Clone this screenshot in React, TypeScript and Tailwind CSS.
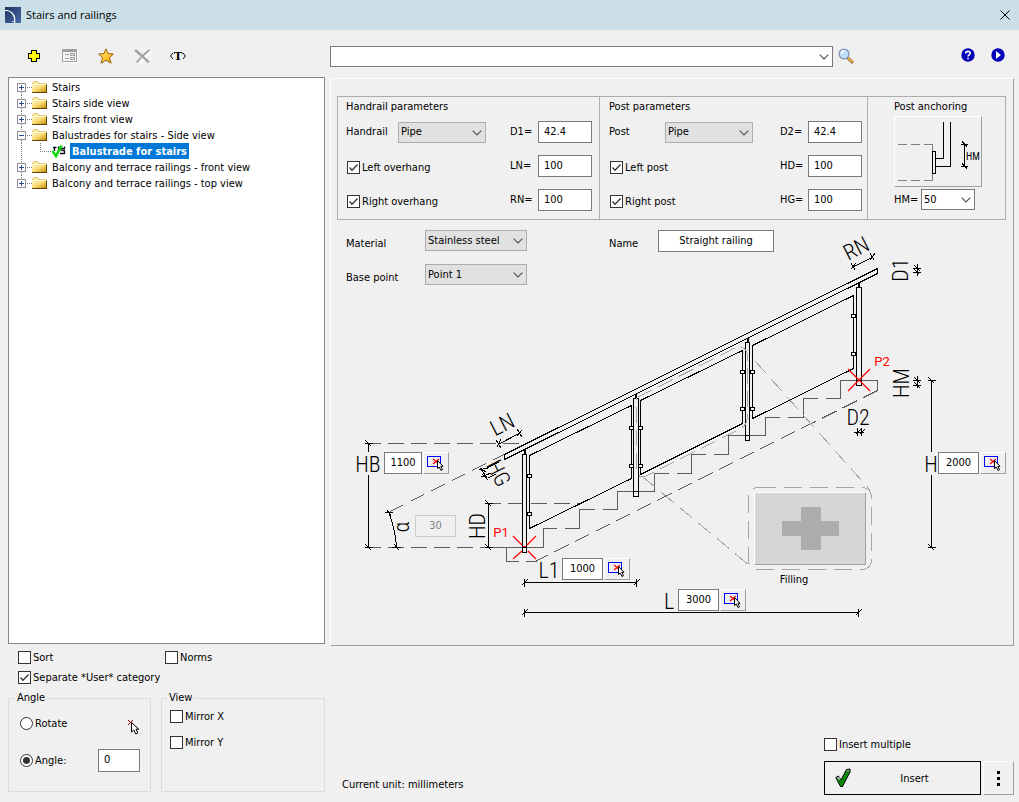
import React, { useId, useState } from "react";

const UI = "font-['DejaVu_Sans_Condensed','DejaVu_Sans',sans-serif]";

/* ---------- small controls ---------- */

function CheckBox({ label, checked = false }: { label: string; checked?: boolean }) {
  const id = useId();
  return (
    <div className="flex items-center gap-[2px]">
      <span className="relative block h-[13px] w-[13px]">
        <input
          id={id}
          type="checkbox"
          defaultChecked={checked}
          className="peer block h-[13px] w-[13px] appearance-none border border-[#333333] bg-white"
        />
        <svg
          viewBox="0 0 13 13"
          className="pointer-events-none absolute inset-0 hidden h-[13px] w-[13px] peer-checked:block"
        >
          <path d="M2.5 6.5 L5 9.2 L10.5 3.5" fill="none" stroke="#333333" strokeWidth="1.3" />
        </svg>
      </span>
      <label htmlFor={id} className="pt-px whitespace-nowrap">{label}</label>
    </div>
  );
}

function Radio({ label, checked = false }: { label: string; checked?: boolean }) {
  const id = useId();
  return (
    <div className="flex items-center gap-[2px]">
      <span className="relative block h-[13px] w-[13px]">
        <input
          id={id}
          name="rotation"
          type="radio"
          defaultChecked={checked}
          className="peer block h-[13px] w-[13px] appearance-none rounded-full border border-[#333333] bg-white"
        />
        <span className="pointer-events-none absolute inset-[3px] hidden rounded-full bg-[#333333] peer-checked:block" />
      </span>
      <label htmlFor={id}>{label}</label>
    </div>
  );
}

function Chevron({ className = "" }: { className?: string }) {
  return (
    <svg viewBox="0 0 10 6" className={`pointer-events-none h-[6px] w-[10px] ${className}`}>
      <path d="M0.7 0.7 L5 4.9 L9.3 0.7" fill="none" stroke="#505050" strokeWidth="1.1" />
    </svg>
  );
}

function Select({
  id,
  options,
  width,
  white = false,
  label,
}: {
  id?: string;
  options: string[];
  width: string;
  white?: boolean;
  label?: string;
}) {
  return (
    <span className={`relative block h-[21px] ${width}`}>
      <select
        id={id}
        aria-label={label}
        className={`block h-[21px] w-full appearance-none border pr-4 pl-[2px] text-[11px] leading-4 ${
          white ? "border-[#7a7a7a] bg-white" : "border-[#adadad] bg-[#e1e1e1]"
        }`}
      >
        {options.map((o) => (
          <option key={o}>{o}</option>
        ))}
      </select>
      <Chevron className="absolute top-2 right-1" />
    </span>
  );
}

function NumberField({ id, value }: { id: string; value: string }) {
  return (
    <input
      id={id}
      defaultValue={value}
      className="h-[22px] w-[54px] border border-[#7a7a7a] bg-white px-[5px] pb-[2px] text-[11px] leading-4"
    />
  );
}

/* ---------- icons ---------- */

function AppIcon() {
  return (
    <svg viewBox="0 0 16 16" className="h-4 w-4">
      <defs>
        <linearGradient id="appBg" x1="0" y1="0" x2="1" y2="1">
          <stop offset="0" stopColor="#22355f" />
          <stop offset="1" stopColor="#4568a8" />
        </linearGradient>
      </defs>
      <rect width="16" height="16" fill="url(#appBg)" />
      <path d="M0 3.5 H2 C6 4 9.5 7.5 9.7 12 V16" fill="none" stroke="#fff" strokeWidth="1.2" />
      <path d="M7 14.5 H10" stroke="#cfd9ee" strokeWidth="1" />
    </svg>
  );
}

function PlusIcon() {
  return (
    <svg viewBox="0 0 12 12" className="h-3 w-3" shapeRendering="crispEdges">
      <path
        d="M3.5 0.5 H8.5 V3.5 H11.5 V8.5 H8.5 V11.5 H3.5 V8.5 H0.5 V3.5 H3.5 Z"
        fill="#ffff00"
        stroke="#000"
      />
    </svg>
  );
}

function FormIcon() {
  return (
    <svg viewBox="0 0 16 14" className="h-[14px] w-4" shapeRendering="crispEdges">
      <rect x="1.5" y="1.5" width="14" height="12" fill="none" stroke="#fff" />
      <rect x="0.5" y="0.5" width="14" height="12" fill="#f4f4f4" stroke="#a0a0a0" />
      <path d="M1 2 H14" stroke="#a0a0a0" strokeWidth="2" />
      <path d="M3 5.5 H7 M3 9.5 H7" stroke="#a0a0a0" />
      <path d="M8.5 4.5 H12.5 V6.5 H8.5 Z M8.5 8.5 H12.5 V10.5 H8.5 Z" fill="none" stroke="#a0a0a0" />
    </svg>
  );
}

function StarIcon() {
  return (
    <svg viewBox="0 0 16 16" className="h-4 w-4">
      <defs>
        <linearGradient id="starFill" x1="0" y1="0" x2="1" y2="1">
          <stop offset="0" stopColor="#ffe680" />
          <stop offset="0.6" stopColor="#fdc32e" />
          <stop offset="1" stopColor="#e89a10" />
        </linearGradient>
      </defs>
      <path
        d="M8 0.8 L10 5.6 L15.4 6 L11.4 9.7 L13.2 15.2 L8 12.2 L3 15.2 L4.6 9.7 L0.6 6 L6 5.6 Z"
        fill="url(#starFill)"
        stroke="#9a6410"
        strokeWidth="1"
        strokeLinejoin="round"
      />
    </svg>
  );
}

function DeleteIcon() {
  return (
    <svg viewBox="0 0 17 15" className="h-[15px] w-[17px]">
      <path d="M2 1.5 L15.5 14.5 M16 1.5 L4 14.5" stroke="#fff" strokeWidth="1.6" transform="translate(1 1)" />
      <path d="M1 1 C5 4 9 8 15 13.5" fill="none" stroke="#a0a0a0" strokeWidth="2.2" />
      <path d="M15.5 1 C10 5 6 9 2.5 13.5" fill="none" stroke="#a0a0a0" strokeWidth="1.6" />
    </svg>
  );
}

function MagnifierIcon() {
  return (
    <svg viewBox="0 0 16 16" className="h-4 w-4">
      <path d="M9.5 9.5 L14 14" stroke="#6b4a18" strokeWidth="3" strokeLinecap="round" />
      <path d="M10 9.8 L14 13.8" stroke="#f0b840" strokeWidth="1.8" strokeLinecap="round" />
      <circle cx="6" cy="6" r="4.9" fill="#bfe0fa" stroke="#7f92b0" strokeWidth="1.2" />
      <path d="M3.2 5.6 C3.6 3.8 5 2.9 6.6 3" fill="none" stroke="#fff" strokeWidth="1.4" />
    </svg>
  );
}

function FolderIcon() {
  return (
    <svg viewBox="0 0 16 16" className="h-4 w-4 shrink-0">
      <defs>
        <linearGradient id="folderFill" x1="0" y1="0" x2="1" y2="1">
          <stop offset="0.1" stopColor="#fff6c8" />
          <stop offset="0.5" stopColor="#f6d468" />
          <stop offset="1" stopColor="#c47f00" />
        </linearGradient>
      </defs>
      <path d="M0.5 13 V3.5 L1.5 2.5 H5.5 L6.5 4.5 H13.5 V12.5 Z" fill="#fbe9a6" stroke="#e0c678" />
      <rect x="0" y="5" width="15" height="9" fill="url(#folderFill)" />
      <path d="M0 5.5 H14" stroke="#fff8d8" />
      <path d="M14.5 5 V13.5 H0" fill="none" stroke="#4a3204" strokeOpacity="0.85" />
    </svg>
  );
}

function BalustradeIcon() {
  return (
    <svg viewBox="0 0 16 16" className="h-4 w-4 shrink-0">
      <path d="M2 4.5 H5.5 M3.5 5 V8 M7.5 3.5 V8 M8 8 L11 5.5 H13.5 V3.5 M9 10.5 H13.5 V7.5 H10.5" fill="none" stroke="#111" strokeWidth="1.3" />
      <path d="M1.5 8 L5 13 L10.5 2.5" fill="none" stroke="#08dc08" strokeWidth="2.6" />
    </svg>
  );
}

function Cursor({ x, y }: { x: number; y: number }) {
  return (
    <path
      transform={`translate(${x} ${y})`}
      d="M0.5 0.5 V10 L2.8 8 L4.8 12 L6.8 11 L5 7.2 H7.8 Z"
      fill="#fff"
      stroke="#000"
      strokeWidth="1"
    />
  );
}

/* ---------- tree ---------- */

const GROUPS = [
  { name: "Stairs" },
  { name: "Stairs side view" },
  { name: "Stairs front view" },
  { name: "Balustrades for stairs - Side view", child: "Balustrade for stairs" },
  { name: "Balcony and terrace railings - front view" },
  { name: "Balcony and terrace railings - top view" },
];

function Expander({ open, first, last }: { open: boolean; first: boolean; last: boolean }) {
  return (
    <svg viewBox="0 0 15 16" className="h-4 w-[15px] shrink-0" shapeRendering="crispEdges">
      {!first && <path d="M4.5 0 V4" stroke="#808080" strokeDasharray="1 1" />}
      {!last && <path d="M4.5 13 V16" stroke="#808080" strokeDasharray="1 1" />}
      <path d="M10 8.5 H15" stroke="#808080" strokeDasharray="1 1" />
      <rect x="0.5" y="4.5" width="8" height="8" fill="#fcfcfc" stroke="#919191" />
      <path d="M2 8.5 H7" stroke="#2a4a9c" />
      {!open && <path d="M4.5 6 V11" stroke="#2a4a9c" />}
    </svg>
  );
}

function Tree() {
  return (
    <ul className="min-h-0 flex-1 border border-[#828790] bg-white pt-px pl-2">
      {GROUPS.map((g, i) => (
        <li key={g.name}>
          <div className="flex h-4 items-center">
            <Expander open={!!g.child} first={i === 0} last={i === GROUPS.length - 1} />
            <FolderIcon />
            <span className="pt-[2px] pl-1 leading-4 whitespace-nowrap">{g.name}</span>
          </div>
          {g.child && (
            <div className="flex h-4 items-center">
              <svg viewBox="0 0 34 16" className="h-4 w-[34px] shrink-0" shapeRendering="crispEdges">
                <path d="M4.5 0 V16 M23.5 0 V8.5 H34" fill="none" stroke="#808080" strokeDasharray="1 1" />
              </svg>
              <BalustradeIcon />
              <span className="ml-[3px] bg-[#0078d7] px-[2px] pt-px leading-[15px] font-bold whitespace-nowrap text-white">
                {g.child}
              </span>
            </div>
          )}
        </li>
      ))}
    </ul>
  );
}

/* ---------- parameter panels ---------- */

function AnchorIcon() {
  return (
    <svg viewBox="0 0 86 69" className="h-[69px] w-[86px]" shapeRendering="crispEdges">
      <g fill="none" stroke="#808080">
        <path d="M3 27.5 H38" strokeDasharray="9 4" />
        <path d="M3 63.5 H38" strokeDasharray="9 4" />
        <path d="M37.5 27 V34 M37.5 56 V64" />
      </g>
      <g fill="none" stroke="#000">
        <rect x="37.5" y="34.5" width="3" height="22" />
        <path d="M48.5 5 V41.5 H41 M55.5 5 V49.5 H41" />
        <path d="M69.5 27 V50 M66 27.5 H73 M66 49.5 H73 M67 24.5 L72 29.5 M67 46.5 L72 51.5" />
      </g>
      <text x="71" y="43" fontSize="10" fill="#000" className="font-['Roboto_Condensed','Liberation_Sans_Narrow',sans-serif]">
        HM
      </text>
    </svg>
  );
}

function Parameters() {
  return (
    <div className="flex border border-[#acacac]">
      <section className="w-[262px] border-r border-[#acacac] pb-[2px] pl-2">
        <h2 className="h-[18px] leading-5">Handrail parameters</h2>
        <div className="grid auto-rows-[34px] grid-cols-[52px_112px_28px_54px] items-center">
          <label htmlFor="handrail">Handrail</label>
          <Select id="handrail" options={["Pipe", "Square"]} width="w-[88px]" />
          <label htmlFor="d1">D1=</label>
          <NumberField id="d1" value="42.4" />
          <div className="col-span-2 pt-[2px] pl-px"><CheckBox label="Left overhang" checked /></div>
          <label htmlFor="ln">LN=</label>
          <NumberField id="ln" value="100" />
          <div className="col-span-2 pt-[2px] pl-px"><CheckBox label="Right overhang" checked /></div>
          <label htmlFor="rn">RN=</label>
          <NumberField id="rn" value="100" />
        </div>
      </section>
      <section className="w-[268px] border-r border-[#acacac] pb-[2px] pl-[9px]">
        <h2 className="h-[18px] leading-5">Post parameters</h2>
        <div className="grid auto-rows-[34px] grid-cols-[56px_115px_28px_54px] items-center">
          <label htmlFor="post">Post</label>
          <Select id="post" options={["Pipe", "Square"]} width="w-[88px]" />
          <label htmlFor="d2">D2=</label>
          <NumberField id="d2" value="42.4" />
          <div className="col-span-2 pt-[2px] pl-px"><CheckBox label="Left post" checked /></div>
          <label htmlFor="hd">HD=</label>
          <NumberField id="hd" value="100" />
          <div className="col-span-2 pt-[2px] pl-px"><CheckBox label="Right post" checked /></div>
          <label htmlFor="hg">HG=</label>
          <NumberField id="hg" value="100" />
        </div>
      </section>
      <section className="flex-1 pl-[26px]">
        <h2 className="h-[19px] leading-5 whitespace-nowrap">Post anchoring</h2>
        <button
          aria-label="Post anchoring type"
          className="block h-[71px] w-[88px] border border-t-white border-r-[#a0a0a0] border-b-[#a0a0a0] border-l-white"
        >
          <AnchorIcon />
        </button>
        <div className="flex items-center pt-[2px]">
          <label htmlFor="hm" className="w-[27px]">HM=</label>
          <Select id="hm" options={["50", "100"]} width="w-[54px]" white />
        </div>
      </section>
    </div>
  );
}

function GeneralForm() {
  return (
    <div className="col-start-1 row-start-1 grid auto-rows-[34px] grid-cols-[79px_184px_49px_116px] self-start pt-[10px] pl-[15px]">
      <label htmlFor="material" className="leading-7">Material</label>
      <Select id="material" options={["Stainless steel", "Steel"]} width="w-[102px]" />
      <label htmlFor="name" className="leading-7">Name</label>
      <input
        id="name"
        defaultValue="Straight railing"
        className="z-10 h-[22px] w-[116px] border border-[#7a7a7a] bg-white pb-[2px] text-center text-[11px]"
      />
      <label htmlFor="basepoint" className="leading-7">Base point</label>
      <Select id="basepoint" options={["Point 1", "Point 2"]} width="w-[102px]" />
    </div>
  );
}

/* ---------- stair drawing ---------- */

function DimField({
  label,
  value,
  place,
  width = "w-[41px]",
}: {
  label: string;
  value: string;
  place: string;
  width?: string;
}) {
  return (
    <div className={`absolute flex gap-px ${place}`}>
      <input
        aria-label={label}
        defaultValue={value}
        className={`h-[22px] border border-[#7a7a7a] bg-white pb-[2px] text-center text-[11px] ${width}`}
      />
      <button
        aria-label={`Pick ${label}`}
        className="h-[22px] w-[26px] border border-t-white border-r-[#a0a0a0] border-b-[#a0a0a0] border-l-white bg-[#f0f0f0]"
      >
        <svg viewBox="0 0 24 20" className="h-5 w-6">
          <rect x="3.5" y="3.5" width="13" height="10" fill="none" stroke="#0000ff" shapeRendering="crispEdges" />
          <path d="M9 6 L15 11 M15 6 L9 11" stroke="#ff0000" strokeWidth="1.2" />
          <path
            d="M13.5 7.5 V15.5 L15.2 14 L17 17.5 L18.5 16.7 L16.8 13.3 H19 Z"
            fill="#fff"
            stroke="#000"
          />
        </svg>
      </button>
    </div>
  );
}

function Tick({ x, y, vertical = false }: { x: number; y: number; vertical?: boolean }) {
  return <path d={vertical ? `M${x - 4} ${y} h8 M${x - 3} ${y - 3} l6 6` : `M${x} ${y - 4} v8 M${x - 3} ${y + 3} l6 -6`} />;
}

const POSTS = [
  { x: 522.5, w: 4, top: 454.5, foot: 547.5 },
  { x: 633.5, w: 5, top: 398.5, foot: 491.5 },
  { x: 745.5, w: 4, top: 342.5, foot: 435.5 },
  { x: 856.5, w: 5, top: 287.5, foot: 380.5 },
];

const PANES = [
  "529.5,455.5 631.5,405.5 631.5,478.5 529.5,528.5",
  "640.5,400.5 742.5,350.5 742.5,423.5 640.5,474.5",
  "752.5,345.5 853.5,295.5 853.5,368.5 752.5,418.5",
];

const CLIPS = [
  [527.5, 474.5], [527.5, 512.5],
  [629.5, 426.5], [629.5, 464.5], [638.5, 426.5], [638.5, 464.5],
  [740.5, 370.5], [740.5, 407.5], [750.5, 370.5], [750.5, 407.5],
  [851.5, 314.5], [851.5, 352.5],
];

const LABELS: { text: string; x: number; y: number; turn: number }[] = [
  { text: "HB", x: 368, y: 464, turn: 0 },
  { text: "LN", x: 502, y: 424, turn: -27 },
  { text: "HG", x: 499, y: 473, turn: 63 },
  { text: "HD", x: 477, y: 526, turn: -90 },
  { text: "α", x: 401, y: 527, turn: -90 },
  { text: "L1", x: 549, y: 570, turn: 0 },
  { text: "L", x: 669, y: 601, turn: 0 },
  { text: "H", x: 931, y: 464, turn: 0 },
  { text: "RN", x: 856, y: 248, turn: -27 },
  { text: "D1", x: 900, y: 270, turn: -90 },
  { text: "HM", x: 901, y: 383, turn: -90 },
  { text: "D2", x: 858, y: 417, turn: 0 },
];

function Drawing() {
  return (
    <svg
      viewBox="331 220 682 425"
      className="block h-[425px] w-[682px]"
      fill="none"
      role="img"
      aria-label="Stair balustrade, side view"
    >
      <g stroke="#5c5c5c" shapeRendering="crispEdges">
        <path d="M365 443.5 H528" strokeDasharray="16 7" />
        <path d="M365 547.5 H486" strokeDasharray="16 7" />
        <path d="M485 503.5 H581" strokeDasharray="16 7" />
        <path d="M390 511.5 L504 454.5" strokeDasharray="15 8" />
        <path d="M486 547.5 H543.5 V528.5 H557 M565 528.5 H579.5 V509.5 H595 M603 509.5 H617.5 V491.5 H654.5 V473.5 H669 M677 473.5 H691.5 V454.5 H706 M714 454.5 H728.5 V435.5 H765.5 V417.5 H780 M788 417.5 H803.5 V398.5 H818 M826 398.5 H840.5 V380.5 H877.5 V390.5" />
        <path d="M506.5 547.5 V561.5 H537" strokeDasharray="26 7" />
        <path d="M877.5 390.5 L535 561.5" strokeDasharray="16 7" />
      </g>

      <g stroke="#a6a6a6" shapeRendering="crispEdges">
        <rect x="748.5" y="487.5" width="123" height="82" rx="9" strokeDasharray="18 8" />
        <path d="M755 361 L870 490" strokeDasharray="16 8" />
        <path d="M643 477 L750 566" strokeDasharray="16 8" />
      </g>

      <g stroke="#000" shapeRendering="crispEdges">
        <path d="M877.5 268.5 L504.5 454.5 V459.5 L877.5 273.5 Z" />
        {PANES.map((p) => (
          <polygon key={p} points={p} />
        ))}
        {POSTS.map((p) => (
          <g key={p.x}>
            <path d={`M${p.x + 2} ${p.top - 5} V${p.top}`} strokeWidth="2" />
            <rect x={p.x} y={p.top} width={p.w} height={p.foot - p.top + 5} fill="#f0f0f0" />
            <path d={`M${p.x} ${p.foot} h${p.w}`} />
          </g>
        ))}
        {CLIPS.map(([x, y]) => (
          <rect key={`${x}-${y}`} x={x} y={y} width="4" height="3" fill="#f0f0f0" />
        ))}

        <path d="M368.5 443 V452 M368.5 475 V548" />
        <Tick x={368.5} y={443.5} vertical />
        <Tick x={368.5} y={547.5} vertical />
        <path d="M488.5 503 V548" />
        <Tick x={488.5} y={503.5} vertical />
        <Tick x={488.5} y={547.5} vertical />
        <path d="M931.5 380 V452 M931.5 475 V548" />
        <Tick x={931.5} y={380.5} vertical />
        <Tick x={931.5} y={547.5} vertical />
        <path d="M524 582.5 H637" />
        <Tick x={524.5} y={582.5} />
        <Tick x={636.5} y={582.5} />
        <path d="M524 612.5 H859" />
        <Tick x={524.5} y={612.5} />
        <Tick x={858.5} y={612.5} />
        <path d="M389 513 C393 524 396 534 396.5 548" />
        <path d="M385 512.5 h8 M387 510 l4 6 M392 547.5 h9 M394 544 l5 6" />
        <path d="M499 444 L520 433 M496 440 l5 8 M517 429 l5 8 M501 439 l-4 8 M522 430 l-5 6" />
        <path d="M853 267 L873 257 M851 263 l4 7 M870 253 l4 7 M856 263 l-5 6 M875 253 l-5 7" />
        <path d="M479 469.5 l9 -1 M480 468 l6 4 M481 477 l10 -4 M482 474 l6 6 M481 469 l6 9 M487 468 L499 462 M488 478 L496 474" />
        <path d="M913 268.5 h8 M913 272.5 h8 M917.5 264 v12 M914.5 265.5 l6 6 M914.5 269.5 l5 5" />
        <path d="M913 380.5 h8 M913 385.5 h8 M917.5 376 v12 M914.5 377.5 l6 6 M914.5 382.5 l6 6" />
        <path d="M854 432.5 h10 M857.5 428 v8 M861.5 428 v8 M855.5 434.5 l5 -5 M859.5 434.5 l5 -5" />
      </g>

      <g stroke="#a6a6a6" shapeRendering="crispEdges">
        <path
          d="M638 397 L733 349 Q745 344 747.5 354 V417 Q747 426 738 430 L646 476 Q636 479 636.5 468 V398"
          strokeDasharray="16 7"
        />
      </g>

      <g stroke="#ff0000" strokeWidth="1.2">
        <path d="M513 536 L522 545 M528 551 L536 559 M536 536 L527 545 M522 551 L513 559 M523 546.5 h3" />
        <path d="M848 369 L870 391 M870 369 L848 391" />
      </g>

      <g className="font-['Roboto_Condensed','Liberation_Sans_Narrow',Roboto,sans-serif] font-light" fill="#000" fontSize="22" textAnchor="middle">
        {LABELS.map((l) => (
          <text key={l.text} transform={`translate(${l.x} ${l.y}) rotate(${l.turn})`} y="8">
            {l.text}
          </text>
        ))}
      </g>
      <g className="font-[Roboto,sans-serif]" fill="#ff0000" fontSize="13" textAnchor="middle">
        <text x="501" y="537">P1</text>
        <text x="882" y="366">P2</text>
      </g>
    </svg>
  );
}

function Diagram() {
  return (
    <div className="relative col-start-1 row-start-1 w-[682px]">
      <Drawing />
      <DimField label="HB" value="1100" place="left-[53px] top-[232px]" width="w-[38px]" />
      <DimField label="L1" value="1000" place="left-[231px] top-[338px]" />
      <DimField label="L" value="3000" place="left-[347px] top-[369px]" />
      <DimField label="H" value="2000" place="left-[607px] top-[232px]" />
      <input
        aria-label="Slope angle"
        defaultValue="30"
        disabled
        className="absolute top-[295px] left-[84px] h-[22px] w-[41px] border border-[#cccccc] bg-[#f0f0f0] pb-[2px] text-center text-[11px] text-[#838383]"
      />
      <div className="absolute top-[272px] left-[423px] flex w-28 flex-col items-center gap-[7px]">
        <button
          aria-labelledby="filling"
          className="flex h-[73px] w-28 items-center justify-center border border-t-white border-r-[#a0a0a0] border-b-[#a0a0a0] border-l-white bg-[#d6d6d6]"
        >
          <svg viewBox="0 0 57 43" className="h-[43px] w-[57px]" shapeRendering="crispEdges">
            <path d="M19 0 H39 V14 H57 V29 H39 V43 H19 V29 H0 V14 H19 Z" fill="#adadad" />
          </svg>
        </button>
        <span id="filling" className="pr-8 leading-4">Filling</span>
      </div>
    </div>
  );
}

/* ---------- page ---------- */

export default function App() {
  const [angle, setAngle] = useState("0");
  return (
    <div className={`flex min-h-screen flex-col bg-[#f0f0f0] text-[11px] leading-4 text-black ${UI}`}>
      <header className="flex h-[30px] items-center gap-[5px] bg-[#cbdfe8] pr-2 pl-[5px]">
        <AppIcon />
        <h1 className="flex-1 font-['Open_Sans','Noto_Sans',sans-serif] text-[11px]">Stairs and railings</h1>
        <button aria-label="Close" className="flex h-5 w-3 items-center justify-center">
          <svg viewBox="0 0 10 10" className="h-[10px] w-[10px]">
            <path d="M0.5 0.5 L9.5 9.5 M9.5 0.5 L0.5 9.5" stroke="#000" />
          </svg>
        </button>
      </header>

      <main className="flex flex-1 gap-[5px] pr-[5px] pl-2">
        <div className="flex w-[317px] shrink-0 flex-col">
          <div className="flex h-[47px] items-center gap-3 pt-[5px] pl-[14px]">
            <button aria-label="Add" className="flex w-6 justify-center"><PlusIcon /></button>
            <button aria-label="Edit" className="flex w-6 justify-center"><FormIcon /></button>
            <button aria-label="Favourite" className="flex w-6 justify-center"><StarIcon /></button>
            <button aria-label="Delete" className="flex w-6 justify-center"><DeleteIcon /></button>
            <button aria-label="Text" className="flex w-6 items-center justify-center">
              <svg viewBox="0 0 3 6" className="h-[6px] w-[3px]"><path d="M3 0 L0.5 3 L3 6" fill="none" stroke="#000" /></svg>
              <span className="px-px font-['Liberation_Serif',serif] text-[13px] leading-4 font-bold">T</span>
              <svg viewBox="0 0 3 6" className="h-[6px] w-[3px]"><path d="M0 0 L2.5 3 L0 6" fill="none" stroke="#000" /></svg>
            </button>
          </div>

          <Tree />

          <div className="pt-1">
            <div className="flex h-[18px] items-center pl-[10px]">
              <div className="w-[147px]"><CheckBox label="Sort" /></div>
              <CheckBox label="Norms" />
            </div>
            <div className="mt-[2px] flex h-[18px] items-center pl-[10px]">
              <CheckBox label="Separate *User* category" checked />
            </div>
            <div className="flex gap-[10px] pt-[5px] pb-[10px]">
              <fieldset className="h-[101px] w-[143px] border border-[#dcdcdc] pl-[11px]">
                <legend className="-ml-[5px] px-[2px] leading-[14px]">Angle</legend>
                <div className="flex h-[37px] items-center justify-between pr-2">
                  <Radio label="Rotate" />
                  <svg viewBox="0 0 14 17" className="mt-2 h-[17px] w-[14px]">
                    <path d="M0 1 L5 6 M5 1 L0 6" stroke="#a00000" />
                    <Cursor x={3} y={3} />
                  </svg>
                </div>
                <div className="flex h-[37px] items-center justify-between pr-[10px]">
                  <Radio label="Angle:" checked />
                  <input
                    aria-label="Angle value"
                    value={angle}
                    onChange={(e) => setAngle(e.target.value)}
                    className="h-[23px] w-[42px] border border-[#7a7a7a] bg-white px-[5px] pb-[2px] text-[11px]"
                  />
                </div>
              </fieldset>
              <fieldset className="h-[101px] flex-1 border border-[#dcdcdc] pl-2">
                <legend className="-ml-[3px] px-[2px] leading-[14px]">View</legend>
                <div className="flex h-[22px] items-center"><CheckBox label="Mirror X" /></div>
                <div className="mt-1 flex h-[22px] items-center"><CheckBox label="Mirror Y" /></div>
              </fieldset>
            </div>
          </div>
        </div>

        <div className="flex flex-1 flex-col">
          <div className="flex h-12 items-center pt-[5px]">
            <div className="w-[503px]">
              <Select options={[""]} width="w-full" white label="Search" />
            </div>
            <button aria-label="Find" className="ml-[5px] pb-[2px]"><MagnifierIcon /></button>
            <div className="ml-auto flex gap-4 pr-[9px] pb-[4px]">
              <button aria-label="Help">
                <svg viewBox="0 0 14 14" className="h-[14px] w-[14px]">
                  <circle cx="7" cy="7" r="6.7" fill="#0000b8" />
                  <path d="M4.8 5.4 C4.8 2.8 9.3 2.8 9.2 5.3 C9.1 6.9 7 6.8 7 8.6 M7 9.7 V11.3" fill="none" stroke="#fff" strokeWidth="1.7" />
                </svg>
              </button>
              <button aria-label="Play">
                <svg viewBox="0 0 14 14" className="h-[14px] w-[14px]">
                  <circle cx="7" cy="7" r="6.7" fill="#0000b8" />
                  <path d="M5 3 L10 7 L5 11 Z" fill="#fff" />
                </svg>
              </button>
            </div>
          </div>

          <div className="flex-1 border border-t-white border-r-[#a0a0a0] border-b-[#a0a0a0] border-l-white">
            <div className="pt-[17px] pr-[7px] pl-[6px]">
              <Parameters />
            </div>
            <div className="grid">
              <Diagram />
              <GeneralForm />
            </div>
          </div>

          <footer className="flex h-[156px] items-end justify-between pb-[7px] pl-3">
            <p className="pb-[2px]">Current unit: millimeters</p>
            <div className="flex flex-col gap-2">
              <CheckBox label="Insert multiple" />
              <div className="flex gap-[2px]">
                <button className="flex h-[34px] w-[157px] items-center border border-black px-[10px]">
                  <svg viewBox="0 0 16 20" className="h-5 w-4">
                    <path d="M0.8 9.5 L3.5 8 L6 12 L11.5 1.5 L15 1 L15 4 L7.5 18.5 H5.5 Z" fill="#068a06" stroke="#000" />
                    <path d="M2 10.5 L4 9.5 L4.6 12 M12 3 L14 2.5" fill="none" stroke="#a8a8a8" strokeWidth="1.6" />
                  </svg>
                  <span className="flex-1 pt-[2px] pl-2 text-center">Insert</span>
                </button>
                <button
                  aria-label="More options"
                  className="flex h-[34px] w-[31px] flex-col items-center justify-center gap-[3px] border border-t-white border-r-[#a0a0a0] border-b-[#a0a0a0] border-l-white"
                >
                  <span className="h-[3px] w-[3px] bg-black" />
                  <span className="h-[3px] w-[3px] bg-black" />
                  <span className="h-[3px] w-[3px] bg-black" />
                </button>
              </div>
            </div>
          </footer>
        </div>
      </main>
    </div>
  );
}
